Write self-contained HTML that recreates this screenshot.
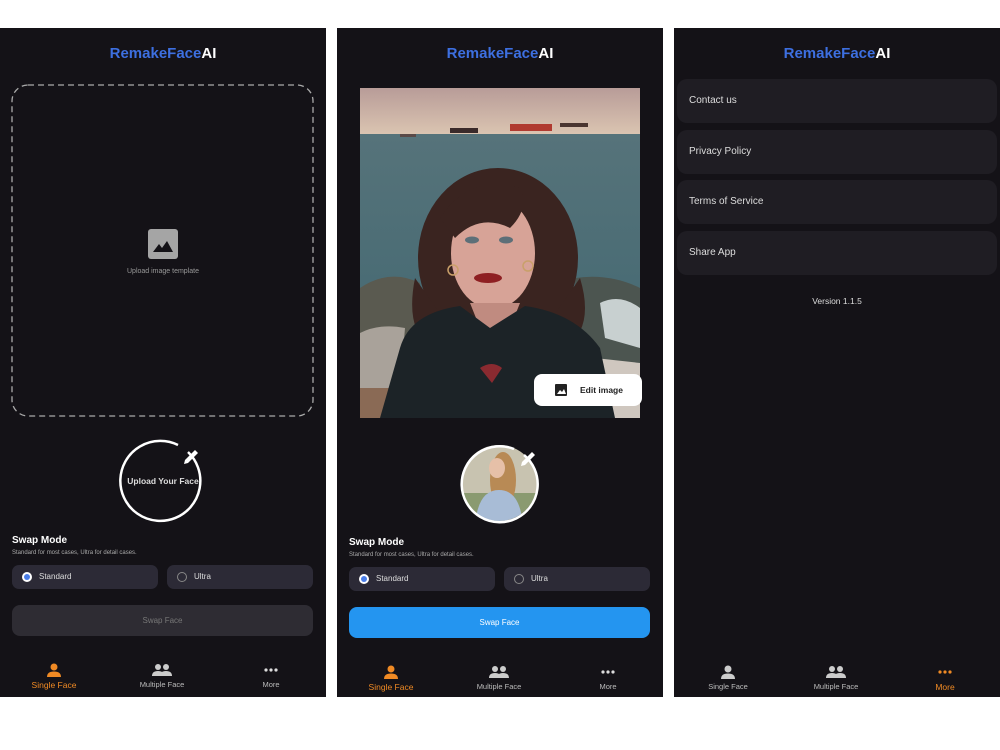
<!DOCTYPE html>
<html><head><meta charset="utf-8"><style>
*{margin:0;padding:0;box-sizing:border-box}
body{width:1000px;height:750px;background:#fff;font-family:"Liberation Sans",sans-serif;position:relative;overflow:hidden}
.p{position:absolute;top:28px;width:326px;height:669px;background:#141217}
.logo{position:absolute;top:17px;left:0;right:0;text-align:center;font-weight:bold;font-size:15px;color:#3d6fe0}
.logo b{color:#fff}
.a{position:absolute}
.sm{position:absolute;left:12px;font-weight:bold;font-size:10px;color:#fff}
.sub{position:absolute;left:12px;font-size:6px;color:#aaa}
.rb{position:absolute;width:146px;height:24px;border-radius:7px;background:#2c2a36;color:#ddd;font-size:8px;line-height:24px;padding-left:27px}
.rb i{position:absolute;left:10px;top:7px;width:10px;height:10px;border-radius:50%;border:1px solid #888}
.rb i.on{border:none;background:#fff;}
.rb i.on:after{content:"";position:absolute;left:2px;top:2px;width:6px;height:6px;border-radius:50%;background:#4a7de8}
.btn{position:absolute;left:12px;width:301px;height:31px;border-radius:8px;text-align:center;line-height:31px;font-size:8px}
.nav{position:absolute;top:635px;width:80px;text-align:center;font-size:7.5px;color:#bbb}
.nav svg{display:block;margin:0 auto 3px}
.it{position:absolute;left:3px;width:320px;height:44px;border-radius:10px;background:#1f1d23;color:#ddd;font-size:10px;line-height:44px;padding-left:12px}
</style></head><body>

<!-- Panel 1 -->
<div class="p" style="left:0">
  <div class="logo">RemakeFace<b>AI</b></div>
  <svg class="a" style="left:11px;top:56px" width="304" height="334"><rect x="1" y="1" width="301" height="331" rx="16" fill="none" stroke="#aaa" stroke-width="1.3" stroke-dasharray="6 4"/></svg>
  <div class="a" style="left:148px;top:201px;width:30px;height:30px;background:#a5a5a5;border-radius:3px">
    <svg width="30" height="30"><path d="M5 23 L11 15 L14 19 L19 12 L25 23 Z" fill="#141217"/></svg>
  </div>
  <div class="a" style="left:0;width:326px;top:240px;text-align:center;font-size:7px;color:#999">Upload image template</div>
  <svg class="a" style="left:118px;top:408px" width="90" height="90"><path d="M70 16 A40 40 0 1 1 60 9" fill="none" stroke="#fff" stroke-width="2.5"/><path d="M67 24 L77 14 L80 17 L70 27 L66 28 Z" fill="#fff"/></svg>
  <div class="a" style="left:0;width:326px;top:448px;text-align:center;font-size:8.5px;color:#ddd;font-weight:bold">Upload Your Face</div>
  <div class="sm" style="top:507px">Swap Mode</div>
  <div class="sub" style="top:522px">Standard for most cases, Ultra for detail cases.</div>
  <div class="rb" style="left:12px;top:537px"><i class="on"></i>Standard</div>
  <div class="rb" style="left:167px;top:537px"><i></i>Ultra</div>
  <div class="btn" style="top:577px;background:#2e2c33;color:#777">Swap Face</div>
  <div class="nav" style="left:14px;color:#f08a24"><svg width="16" height="14"><circle cx="8" cy="4" r="3.5" fill="#f08a24"/><path d="M1 14 Q1 8.5 8 8.5 Q15 8.5 15 14Z" fill="#f08a24"/></svg><span style="font-size:8.5px">Single Face</span></div>
  <div class="nav" style="left:122px"><svg width="20" height="14"><circle cx="6" cy="4" r="3" fill="#ccc"/><circle cx="14" cy="4" r="3" fill="#ccc"/><path d="M0 13 Q0 8 6 8 Q12 8 12 13Z M8 13 Q8 8 14 8 Q20 8 20 13Z" fill="#ccc"/></svg>Multiple Face</div>
  <div class="nav" style="left:231px"><svg width="16" height="14"><circle cx="3" cy="7" r="1.6" fill="#ddd"/><circle cx="8" cy="7" r="1.6" fill="#ddd"/><circle cx="13" cy="7" r="1.6" fill="#ddd"/></svg>More</div>
</div>

<!-- Panel 2 -->
<div class="p" style="left:337px">
  <div class="logo">RemakeFace<b>AI</b></div>
  <svg class="a" style="left:23px;top:60px" width="280" height="330" viewBox="0 0 280 330">
    <defs>
      <linearGradient id="sky" x1="0" y1="0" x2="0" y2="1"><stop offset="0" stop-color="#b89c98"/><stop offset="1" stop-color="#dcc6b2"/></linearGradient>
      <linearGradient id="sea" x1="0" y1="0" x2="0" y2="1"><stop offset="0" stop-color="#56737a"/><stop offset="1" stop-color="#3f6670"/></linearGradient>
    </defs>
    <rect width="280" height="48" fill="url(#sky)"/>
    <rect y="46" width="280" height="284" fill="url(#sea)"/>
    <rect x="90" y="40" width="28" height="5" fill="#3a2a2a"/><rect x="150" y="36" width="42" height="7" fill="#b03a30"/><rect x="200" y="35" width="28" height="4" fill="#4a3530"/><rect x="40" y="46" width="16" height="3" fill="#5a4a48"/>
    <path d="M0 200 Q30 180 60 195 L60 330 L0 330Z" fill="#5a5a50"/>
    <path d="M0 245 Q20 235 45 240 L40 300 L0 310Z" fill="#a9a29a"/>
    <path d="M0 300 L40 300 L40 330 L0 330Z" fill="#8a6a55"/>
    <path d="M215 190 Q250 185 280 200 L280 330 L220 330Z" fill="#4c5550"/>
    <path d="M240 215 Q260 205 280 220 L280 260 L245 250Z" fill="#c8d0d0"/>
    <path d="M235 270 L280 275 L280 330 L240 330Z" fill="#cfc7bf"/>
    <ellipse cx="138" cy="170" rx="80" ry="90" fill="#3a2420"/>
    <path d="M55 190 Q45 240 70 260 L90 240Z M220 190 Q235 240 205 260 L185 240Z" fill="#3a2420"/>
    <ellipse cx="133" cy="165" rx="42" ry="56" fill="#d7a397"/>
    <path d="M80 130 Q110 85 160 100 Q170 120 150 140 Q120 125 95 150Z" fill="#3a2420"/>
    <ellipse cx="112" cy="152" rx="7" ry="3.5" fill="#5d6f78"/><ellipse cx="146" cy="152" rx="7" ry="3.5" fill="#5d6f78"/>
    <ellipse cx="128" cy="190" rx="14" ry="5" fill="#8e1f22"/>
    <circle cx="93" cy="182" r="5" fill="none" stroke="#c9a06a" stroke-width="1.5"/><circle cx="168" cy="178" r="5" fill="none" stroke="#c9a06a" stroke-width="1.5"/>
    <path d="M110 215 L160 215 L150 240 L120 240Z" fill="#c08b80"/>
    <path d="M40 260 Q50 225 100 218 L130 240 L165 218 Q215 225 240 260 L255 330 L20 330Z" fill="#1c2327"/>
    <path d="M120 280 Q132 272 142 280 L132 295Z" fill="#8a2a30"/>
  </svg>
  <div class="a" style="left:197px;top:346px;width:108px;height:32px;background:#fff;border-radius:8px;font-size:8.5px;font-weight:bold;color:#222;line-height:32px;padding-left:46px">Edit image
    <svg class="a" style="left:21px;top:10px" width="12" height="12"><rect width="12" height="12" rx="1" fill="#222"/><path d="M2 10 L5 6 L7 8 L9 5 L11 10Z" fill="#fff"/></svg></div>
  <svg class="a" style="left:118px;top:410px" width="90" height="90">
    <defs><clipPath id="cc"><circle cx="44" cy="45" r="38"/></clipPath></defs>
    <g clip-path="url(#cc)"><rect width="90" height="90" fill="#c8c3b0"/><rect y="55" width="90" height="35" fill="#8a9a70"/><ellipse cx="48" cy="42" rx="13" ry="28" fill="#b88a55"/><ellipse cx="42" cy="30" rx="8" ry="10" fill="#e6c0a8"/><path d="M20 90 Q22 52 44 52 Q66 52 68 90Z" fill="#a8bcd6"/></g>
    <path d="M70 16 A38 38 0 1 1 60 10" fill="none" stroke="#fff" stroke-width="2.5" transform="translate(-1,1)"/>
    <path d="M67 24 L77 14 L80 17 L70 27 L66 28 Z" fill="#fff"/>
  </svg>
  <div class="sm" style="top:509px">Swap Mode</div>
  <div class="sub" style="top:524px">Standard for most cases, Ultra for detail cases.</div>
  <div class="rb" style="left:12px;top:539px"><i class="on"></i>Standard</div>
  <div class="rb" style="left:167px;top:539px"><i></i>Ultra</div>
  <div class="btn" style="top:579px;background:#2495f0;color:#fff">Swap Face</div>
  <div class="nav" style="left:14px;top:637px;color:#f08a24"><svg width="16" height="14"><circle cx="8" cy="4" r="3.5" fill="#f08a24"/><path d="M1 14 Q1 8.5 8 8.5 Q15 8.5 15 14Z" fill="#f08a24"/></svg><span style="font-size:8.5px">Single Face</span></div>
  <div class="nav" style="left:122px;top:637px"><svg width="20" height="14"><circle cx="6" cy="4" r="3" fill="#ccc"/><circle cx="14" cy="4" r="3" fill="#ccc"/><path d="M0 13 Q0 8 6 8 Q12 8 12 13Z M8 13 Q8 8 14 8 Q20 8 20 13Z" fill="#ccc"/></svg>Multiple Face</div>
  <div class="nav" style="left:231px;top:637px"><svg width="16" height="14"><circle cx="3" cy="7" r="1.6" fill="#ddd"/><circle cx="8" cy="7" r="1.6" fill="#ddd"/><circle cx="13" cy="7" r="1.6" fill="#ddd"/></svg>More</div>
</div>

<!-- Panel 3 -->
<div class="p" style="left:674px">
  <div class="logo">RemakeFace<b>AI</b></div>
  <div class="it" style="top:51px">Contact us</div>
  <div class="it" style="top:102px">Privacy Policy</div>
  <div class="it" style="top:152px">Terms of Service</div>
  <div class="it" style="top:203px">Share App</div>
  <div class="a" style="left:0;width:326px;top:268px;text-align:center;font-size:8.5px;color:#ddd">Version 1.1.5</div>
  <div class="nav" style="left:14px;top:637px"><svg width="16" height="14"><circle cx="8" cy="4" r="3.5" fill="#ccc"/><path d="M1 14 Q1 8.5 8 8.5 Q15 8.5 15 14Z" fill="#ccc"/></svg>Single Face</div>
  <div class="nav" style="left:122px;top:637px"><svg width="20" height="14"><circle cx="6" cy="4" r="3" fill="#ccc"/><circle cx="14" cy="4" r="3" fill="#ccc"/><path d="M0 13 Q0 8 6 8 Q12 8 12 13Z M8 13 Q8 8 14 8 Q20 8 20 13Z" fill="#ccc"/></svg>Multiple Face</div>
  <div class="nav" style="left:231px;top:637px;color:#f08a24"><svg width="16" height="14"><circle cx="3" cy="7" r="1.6" fill="#f08a24"/><circle cx="8" cy="7" r="1.6" fill="#f08a24"/><circle cx="13" cy="7" r="1.6" fill="#f08a24"/></svg><span style="font-size:8.5px">More</span></div>
</div>
</body></html>
